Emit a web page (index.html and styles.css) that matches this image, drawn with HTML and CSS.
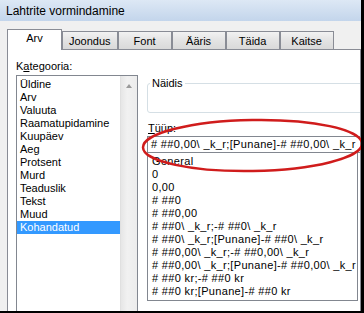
FILE: index.html
```html
<!DOCTYPE html>
<html lang="et">
  <head>
    <meta charset="UTF-8" />
    <meta name="viewport" content="width=device-width, initial-scale=1.0" />
    <title>Lahtrite vormindamine</title>
    <link rel="stylesheet" href="styles.css">
  </head>
  <body>
    <div class="window">
      <div class="titlebar">Lahtrite vormindamine</div>

      <nav class="tabs">
        <div class="tab valgt">Arv</div>
        <div class="tab">Joondus</div>
        <div class="tab">Font</div>
        <div class="tab">Ääris</div>
        <div class="tab">Täida</div>
        <div class="tab">Kaitse</div>
      </nav>

      <section class="panel">
        <div class="kolonne">
          <div class="label">K<u>a</u>tegooria:</div>
          <div class="listbox">
            <ul class="kategorier">
              <li>Üldine</li>
              <li>Arv</li>
              <li>Valuuta</li>
              <li>Raamatupidamine</li>
              <li>Kuupäev</li>
              <li>Aeg</li>
              <li>Protsent</li>
              <li>Murd</li>
              <li>Teaduslik</li>
              <li>Tekst</li>
              <li>Muud</li>
              <li class="valgt">Kohandatud</li>
            </ul>
            <div class="scrollbar"><span class="pil"></span></div>
          </div>
        </div>

        <div class="kolonne">
          <fieldset class="naidis">
            <legend>Näidis</legend>
            <div class="naidis-tom"></div>
          </fieldset>
          <div class="label tyyp"><u>T</u>üüp:</div>
          <div class="input"># ##0,00\ _k_r;[Punane]-# ##0,00\ _k_r</div>
          <ul class="formater">
            <li>General</li>
            <li>0</li>
            <li>0,00</li>
            <li># ##0</li>
            <li># ##0,00</li>
            <li># ##0\ _k_r;-# ##0\ _k_r</li>
            <li># ##0\ _k_r;[Punane]-# ##0\ _k_r</li>
            <li># ##0,00\ _k_r;-# ##0,00\ _k_r</li>
            <li># ##0,00\ _k_r;[Punane]-# ##0,00\ _k_r</li>
            <li># ##0 kr;-# ##0 kr</li>
            <li># ##0 kr;[Punane]-# ##0 kr</li>
          </ul>
        </div>
      </section>

      <svg class="ring" width="226" height="60" viewBox="0 0 226 60">
        <ellipse cx="112.5" cy="29.5" rx="109.5" ry="25.5" fill="none" stroke="#d01c1c" stroke-width="2.5" transform="rotate(-1 112.5 29.5)" />
      </svg>
    </div>
  </body>
</html>
```

FILE: styles.css
```css
* {
  box-sizing: border-box;
}

html {
  background-color: #000;
}

body {
  margin: 0;
}

.window {
  position: relative;
  width: 361px;
  height: 311px;
  overflow: hidden;
  background-color: #f0f0f0;
  font-family: "Liberation Sans", Arial, sans-serif;
  font-size: 11px;
  color: #000;
}

.titlebar {
  height: 21px;
  line-height: 23px;
  padding-left: 6px;
  font-size: 12px;
  background: linear-gradient(#dde8f5, #c3d5eb);
}

.tabs {
  position: relative;
  z-index: 1;
  display: flex;
  align-items: flex-end;
  height: 21px;
  margin-top: 8px;
  padding-left: 7px;
}

.tab {
  height: 18px;
  min-width: 54px;
  margin-bottom: 1px;
  padding: 1px 6px 0;
  line-height: 17px;
  text-align: center;
  border: 1px solid #898c95;
  border-bottom: none;
  background: linear-gradient(#f2f2f2, #e3e3e3 50%, #d9d9d9);
}

.tab.valgt {
  height: 21px;
  min-width: 55px;
  margin-bottom: 0;
  padding-top: 0;
  background: #fff;
}

.panel {
  display: grid;
  grid-template-columns: 122px 220px;
  column-gap: 9px;
  width: 354px;
  height: 263px;
  margin: -1px 0 0 7px;
  padding: 9px 0 0 8px;
  overflow: hidden;
  background-color: #fff;
  border: 1px solid #898c95;
}

.label {
  line-height: 14px;
}

.label u {
  text-decoration-thickness: 1px;
}

.listbox {
  display: flex;
  height: 240px;
  margin-top: 2px;
  border: 1px solid #828790;
}

ul {
  margin: 0;
  padding: 0;
  list-style: none;
}

.kategorier {
  flex: 1;
  padding-top: 2px;
}

.kategorier li {
  height: 13px;
  line-height: 13px;
  padding-left: 3px;
}

.kategorier li.valgt {
  background-color: #3399ff;
  color: #fff;
}

.scrollbar {
  width: 17px;
  display: flex;
  justify-content: center;
  background: linear-gradient(to right, #e6e6e6, #f1f1f1 40%, #ececec);
  border-left: 1px solid #e0e0e0;
}

.pil {
  width: 0;
  height: 0;
  margin-top: 8px;
  border-left: 3.5px solid transparent;
  border-right: 3.5px solid transparent;
  border-bottom: 4px solid #9a9a9a;
}

.naidis {
  margin: 17px 0 0;
  padding: 0 2px;
  border: 1px solid #d5dfe5;
  border-radius: 3px;
}

.naidis legend {
  padding: 0 2px;
  line-height: 14px;
}

.naidis-tom {
  height: 22px;
}

.tyyp {
  margin-top: 8px;
  padding-left: 1px;
}

.input {
  height: 17px;
  margin-top: 1px;
  padding-left: 3px;
  line-height: 15px;
  white-space: nowrap;
  letter-spacing: 0.35px;
  border: 1px solid #828790;
}

.formater {
  width: 211px;
  margin-top: -1px;
  padding: 2px 0 2px 4px;
  border: 1px solid #828790;
  letter-spacing: 0.33px;
}

.formater li {
  height: 13px;
  line-height: 13px;
  white-space: nowrap;
}

.ring {
  position: absolute;
  left: 140px;
  top: 116px;
}
```
